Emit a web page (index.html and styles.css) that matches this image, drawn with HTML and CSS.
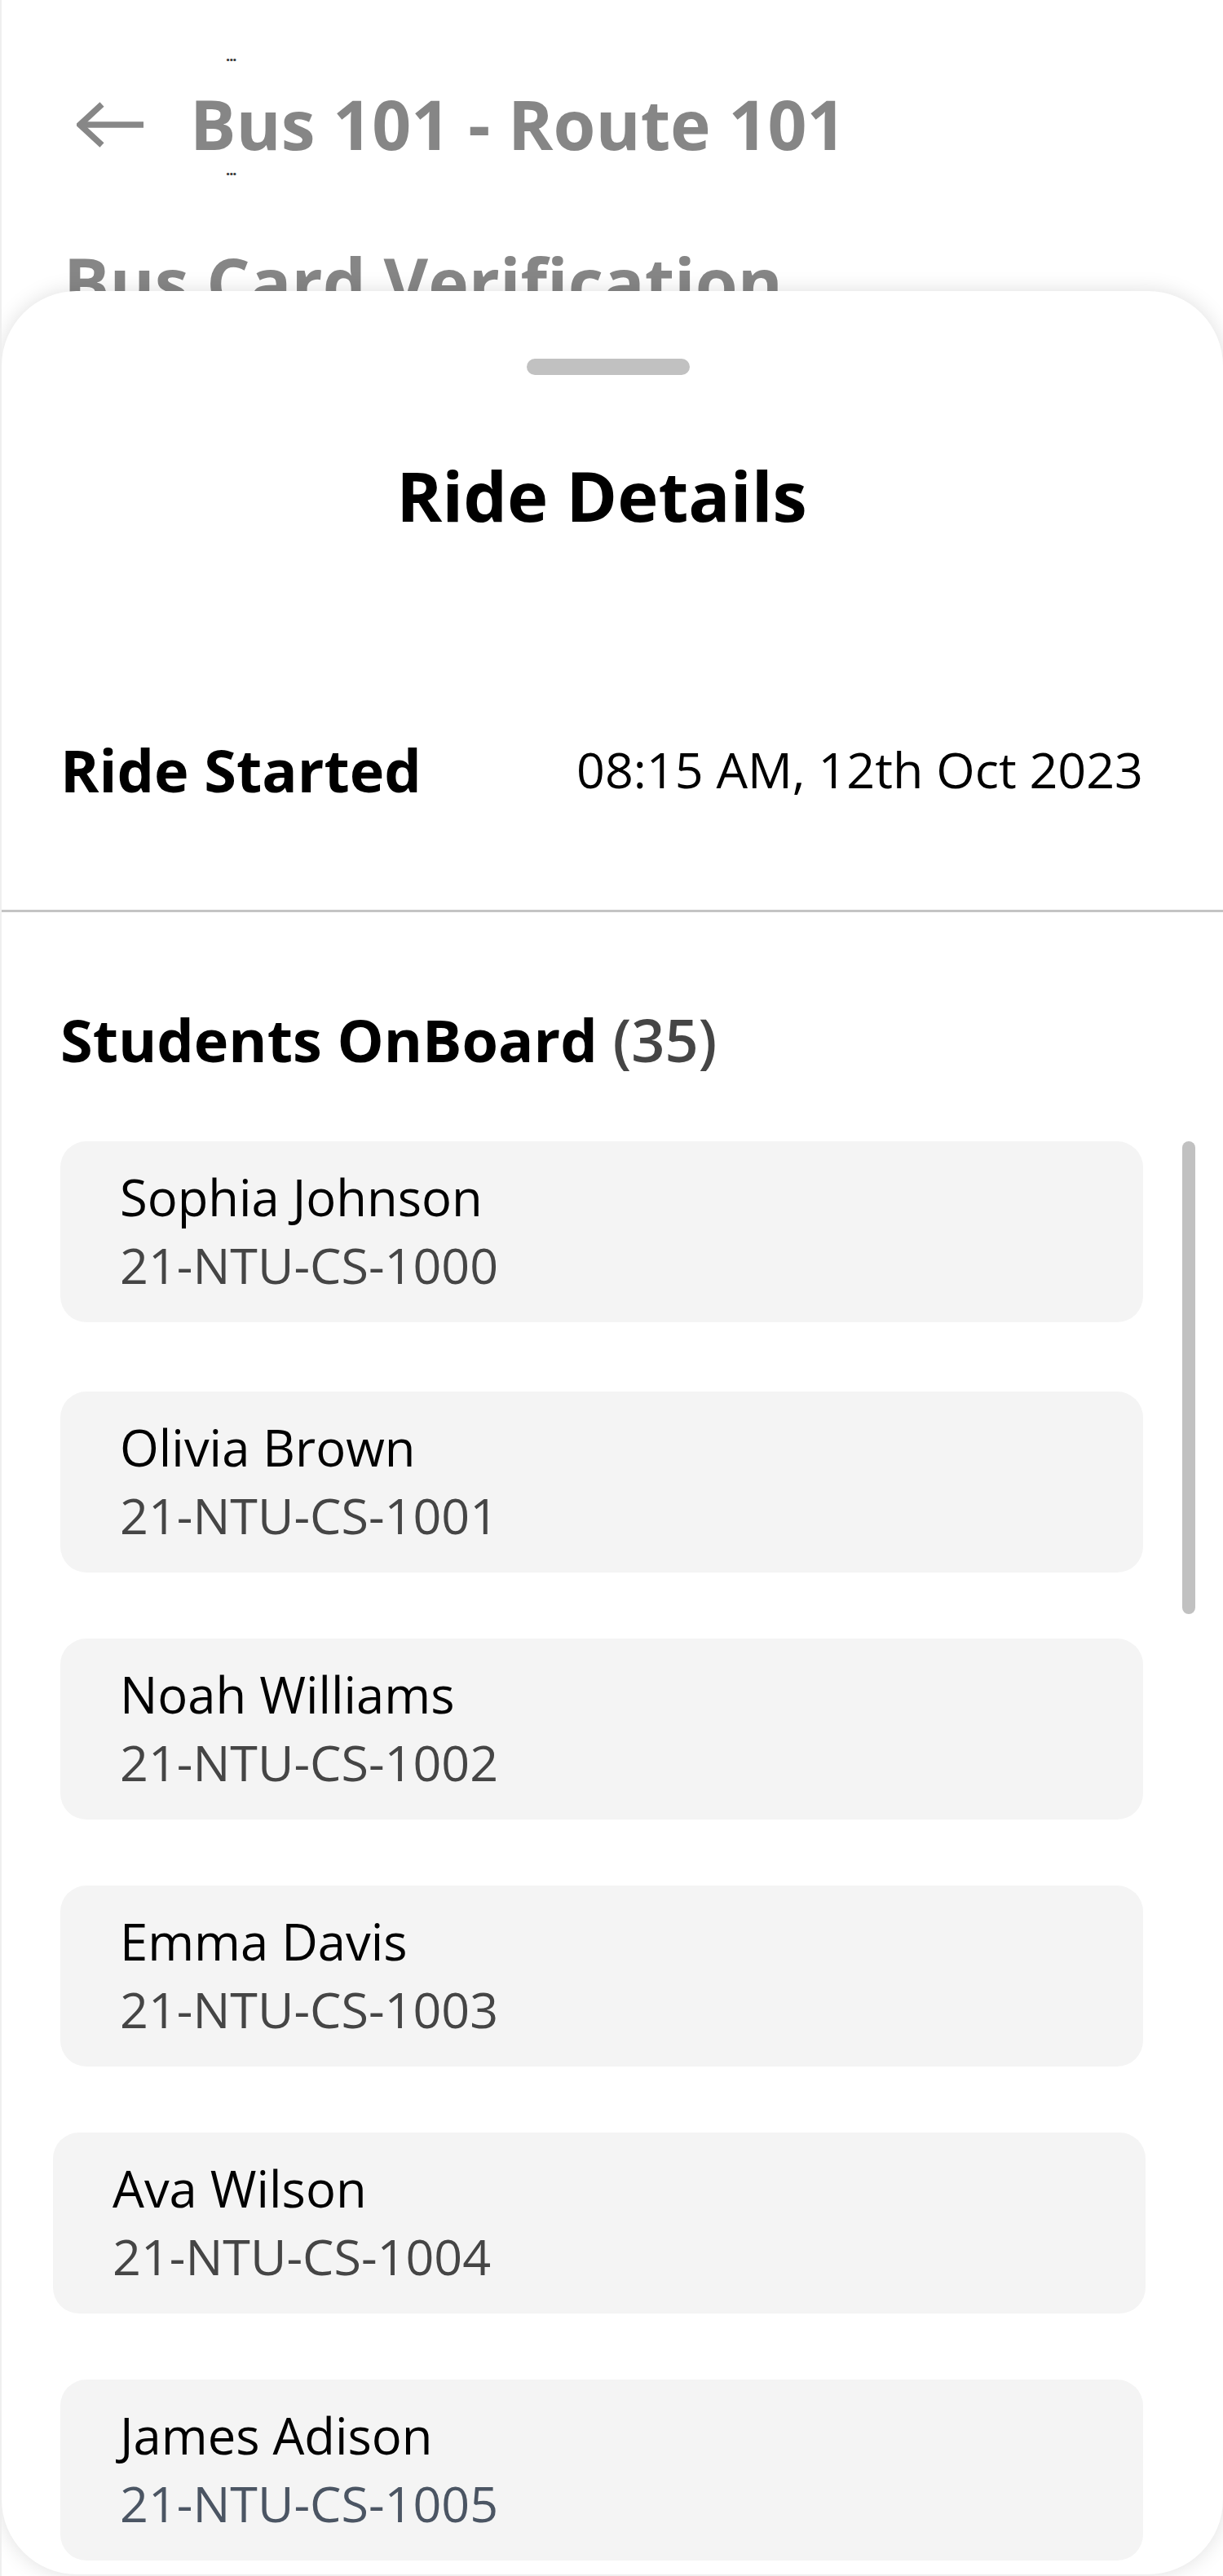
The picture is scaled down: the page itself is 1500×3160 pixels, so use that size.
FILE: index.html
```html
<!DOCTYPE html>
<html lang="en">
<head>
<meta charset="utf-8">
<title>Bus 101 - Route 101</title>
<link rel="stylesheet" href="styles.css">
</head>
<body>
<div class="page">
  <header class="header">
    <svg class="back" viewBox="0 0 82 56" width="82" height="56" aria-hidden="true">
      <polyline points="31,3 4,28 31,53" fill="none" stroke="#878787" stroke-width="7.5"/>
      <line x1="5" y1="28" x2="82" y2="28" stroke="#878787" stroke-width="7.5"/>
    </svg>
    <div class="title-col">
      <div class="dots">...</div>
      <h1 class="title">Bus 101 - Route 101</h1>
      <div class="dots dots-bottom">...</div>
    </div>
  </header>
  <h2 class="section-heading">Bus Card Verification</h2>

  <section class="sheet">
    <div class="sheet-top">
      <div class="handle"></div>
      <h2 class="sheet-title">Ride Details</h2>
      <div class="ride-row">
        <span class="ride-label">Ride Started</span>
        <span class="ride-value">08:15 AM, 12th Oct 2023</span>
      </div>
    </div>
    <div class="divider"></div>
    <div class="sheet-body">
      <h3 class="students-heading">Students OnBoard <span class="count">(35)</span></h3>
      <div class="list">
        <div class="card card-first">
          <div class="name">Sophia Johnson</div>
          <div class="sid">21-NTU-CS-1000</div>
        </div>
        <div class="card">
          <div class="name">Olivia Brown</div>
          <div class="sid">21-NTU-CS-1001</div>
        </div>
        <div class="card">
          <div class="name">Noah Williams</div>
          <div class="sid">21-NTU-CS-1002</div>
        </div>
        <div class="card">
          <div class="name">Emma Davis</div>
          <div class="sid">21-NTU-CS-1003</div>
        </div>
        <div class="card card-wide">
          <div class="name">Ava Wilson</div>
          <div class="sid">21-NTU-CS-1004</div>
        </div>
        <div class="card">
          <div class="name">James Adison</div>
          <div class="sid sid-slate">21-NTU-CS-1005</div>
        </div>
        <div class="scroll-thumb"></div>
      </div>
    </div>
  </section>
</div>
</body>
</html>
```

FILE: styles.css
```css
* { box-sizing: border-box; }

html, body {
  margin: 0;
  padding: 0;
  background: #ffffff;
}

body {
  font-family: "Open Sans", "Noto Sans", "Liberation Sans", sans-serif;
  color: #000;
}

.page {
  position: relative;
  height: 3160px;
  overflow: hidden;
  border-left: 2px solid #efefef;
  background: #ffffff;
}

/* Header */
.header {
  display: flex;
  align-items: flex-start;
  padding: 58px 0 0 92px;
}

.back {
  display: block;
  margin-top: 67px;
  flex: none;
}

.title-col {
  display: flex;
  flex-direction: column;
  margin-left: 57px;
}

.dots {
  font-size: 18px;
  line-height: 20px;
  height: 20px;
  font-weight: 700;
  color: #3c3c3c;
  margin-left: 44px;
  letter-spacing: -1px;
}

.dots-bottom {
  margin-top: -4px;
}

.title {
  margin: 24px 0 0 0;
  font-size: 84px;
  line-height: 100px;
  font-weight: 700;
  color: #868686;
  white-space: nowrap;
}

.section-heading {
  margin: 78px 0 0 76px;
  font-size: 84px;
  line-height: 100px;
  font-weight: 700;
  color: #868686;
  white-space: nowrap;
}

/* Bottom sheet */
.sheet {
  position: absolute;
  top: 357px;
  left: 0;
  right: 0;
  height: 2801px;
  background: #ffffff;
  border-radius: 92px;
  box-shadow: 0 0 26px rgba(0, 0, 0, 0.13);
  overflow: hidden;
}

.sheet-top {
  padding: 83px 98px 0 72px;
}

.handle {
  width: 200px;
  height: 20px;
  border-radius: 10px;
  background: #c1c1c1;
  margin: 0 auto;
  position: relative;
  left: 8px;
}

.sheet-title {
  margin: 97px 0 0 0;
  text-align: center;
  font-size: 85px;
  line-height: 100px;
  font-weight: 700;
  color: #000;
}

.ride-row {
  margin-top: 237px;
  display: flex;
  align-items: center;
  justify-content: space-between;
  height: 100px;
}

.ride-label {
  font-size: 72px;
  line-height: 100px;
  font-weight: 700;
  color: #000;
}

.ride-value {
  font-size: 61px;
  line-height: 100px;
  font-weight: 500;
  color: #000;
}

.divider {
  margin-top: 122px;
  height: 3px;
  background: #c4c4c4;
}

.sheet-body {
  padding: 0 98px 0 72px;
}

.students-heading {
  margin: 106px 0 0 0;
  font-size: 72px;
  line-height: 100px;
  font-weight: 700;
  color: #000;
}

.count {
  color: #454545;
  font-weight: 600;
}

.list {
  position: relative;
  margin-top: 75px;
  display: flex;
  flex-direction: column;
  gap: 81px;
}

.card {
  background: #f4f4f4;
  border-radius: 32px;
  padding: 27px 40px 29px 73px;
}

.card-first {
  margin-bottom: 4px;
}

.card-wide {
  margin-left: -9px;
  margin-right: -3px;
}

.name {
  font-size: 61.5px;
  line-height: 83px;
  font-weight: 500;
  color: #000;
}

.sid {
  font-size: 61px;
  line-height: 83px;
  font-weight: 500;
  color: #454545;
}

.sid-slate {
  color: #4b5563;
}

.scroll-thumb {
  position: absolute;
  top: 0;
  right: -64px;
  width: 16px;
  height: 580px;
  border-radius: 8px;
  background: #c1c1c1;
}
```
